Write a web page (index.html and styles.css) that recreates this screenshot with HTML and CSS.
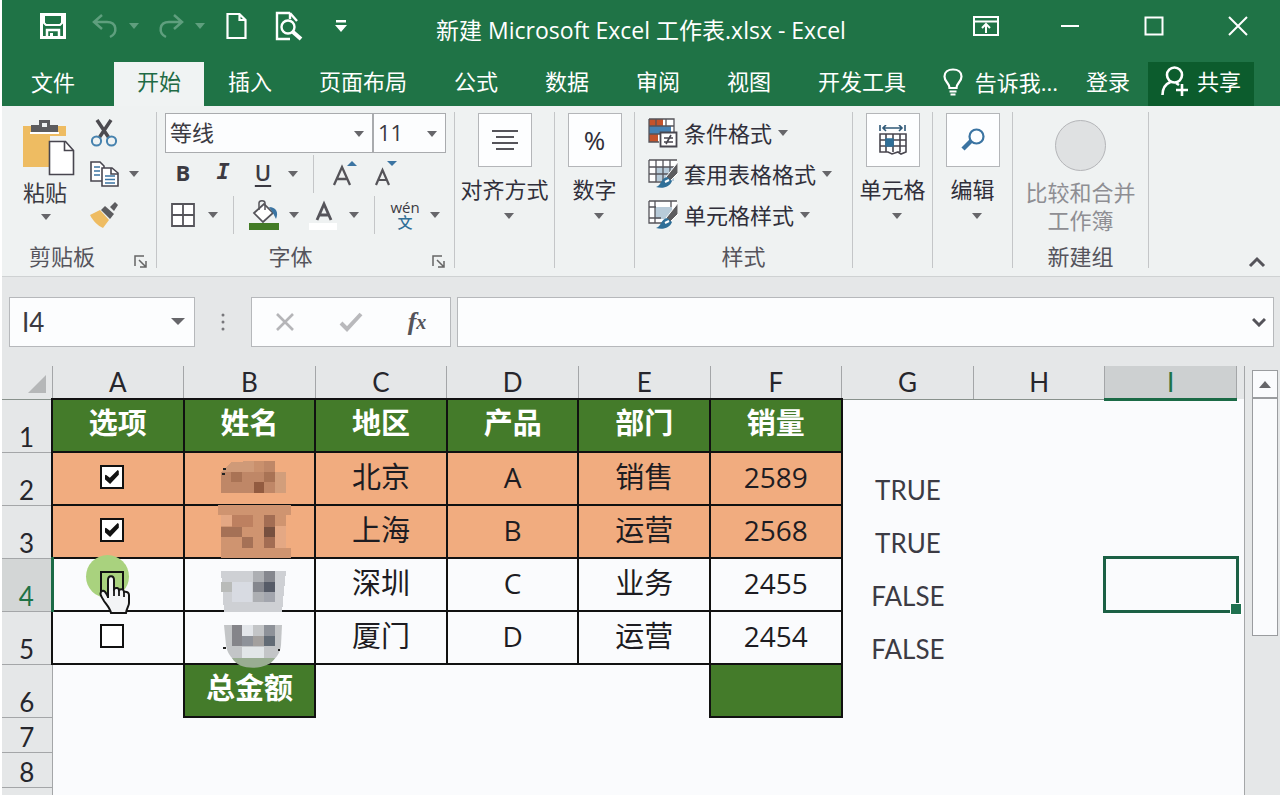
FILE: index.html
```html
<!DOCTYPE html>
<html lang="zh-CN">
<head>
<meta charset="utf-8">
<title>新建 Microsoft Excel 工作表.xlsx - Excel</title>
<link rel="stylesheet" href="styles.css">
</head>
<body>
<div class="app">
  <header class="titlebar">
    <div class="quick">
      <button class="qbtn" aria-label="保存"><svg width="28" height="28" viewBox="0 0 28 28" fill="none" stroke="#fff" stroke-width="3"><path d="M2.500 2.500h23v23h-23z"/><path d="M5 3v8l2 2h14l2-2V3" stroke-width="2"/><path d="M8 26v-8h12v8" stroke-width="2.500"/><path d="M12.500 21v5" stroke-width="3"/></svg></button>
      <button class="qbtn dim" aria-label="撤消"><svg width="28" height="26" viewBox="0 0 28 26" fill="none" stroke="#5f9f7e" stroke-width="2.500"><path d="M11 2 3 9l8 7M3 9h13c10 0 11 11 3 15"/></svg></button>
      <button class="qdrop" aria-label="撤消选项"><i class="caret green"></i></button>
      <button class="qbtn dim" aria-label="恢复"><svg width="28" height="26" viewBox="0 0 28 26" fill="none" stroke="#5f9f7e" stroke-width="2.500"><path d="m17 2 8 7-8 7M25 9H12C2 9 1 20 9 24"/></svg></button>
      <button class="qdrop" aria-label="恢复选项"><i class="caret green"></i></button>
      <button class="qbtn wide" aria-label="新建"><svg width="24" height="28" viewBox="0 0 24 28" fill="none" stroke="#fff" stroke-width="2.200"><path d="M2.500 2h12l6 6v18h-18zM14.500 2v6h6"/></svg></button>
      <button class="qbtn wide" aria-label="打印预览"><svg width="28" height="30" viewBox="0 0 28 30" fill="none" stroke="#fff" stroke-width="2.400"><path d="M15 2H2v26h13M15 2l7 8M15 2v6"/><circle cx="13" cy="16" r="6.500"/><path d="m18 21 8 7" stroke-width="4"/></svg></button>
      <button class="qbtn wide" aria-label="自定义快速访问工具栏"><svg width="12" height="14" viewBox="0 0 12 14"><path d="M1 1h10v2.500H1zM0 6h12l-6 7z" fill="#fff"/></svg></button>
    </div>
    <h1 class="doc-title">新建 Microsoft Excel 工作表.xlsx - Excel</h1>
    <div class="winbtns">
      <button aria-label="功能区显示选项"><svg width="26" height="20" viewBox="0 0 26 20" fill="none" stroke="#fff" stroke-width="2"><path d="M1 1h24v18H1zM1 5.500h24M13 17V9M9 12l4-4 4 4"/></svg></button>
      <button aria-label="最小化"><svg width="20" height="20" viewBox="0 0 20 20"><path d="M1 10h18" stroke="#fff" stroke-width="2"/></svg></button>
      <button aria-label="最大化"><svg width="20" height="20" viewBox="0 0 20 20"><path d="M1.500 1.500h17v17h-17z" fill="none" stroke="#fff" stroke-width="2"/></svg></button>
      <button aria-label="关闭"><svg width="20" height="20" viewBox="0 0 20 20"><path d="m1 1 18 18M19 1 1 19" stroke="#fff" stroke-width="2"/></svg></button>
    </div>
  </header>

  <nav class="tabs">
    <button class="file">文件</button>
    <button class="tab on">开始</button>
    <button class="tab">插入</button>
    <button class="tab">页面布局</button>
    <button class="tab">公式</button>
    <button class="tab">数据</button>
    <button class="tab">审阅</button>
    <button class="tab">视图</button>
    <button class="tab">开发工具</button>
    <div class="account">
      <button class="tell"><svg width="20" height="28" viewBox="0 0 20 28" fill="none" stroke="#fff" stroke-width="2.200"><path d="M6.500 20c0-5-5-6-5-11.500C1.500 4 5 1.500 10 1.500s8.500 2.500 8.500 7c0 5.500-5 6.500-5 11.500zM6.500 23.500h7M7.500 26.500h5"/></svg>告诉我...</button>
      <button class="login">登录</button>
      <button class="share"><svg width="28" height="30" viewBox="0 0 28 30" fill="none" stroke="#fff" stroke-width="2.600"><ellipse cx="13.500" cy="9" rx="7.500" ry="7.500"/><path d="M1.500 29c0-6 3-11 8-13M15 17l3 2M15 24h12M21 18v12"/></svg>共享</button>
    </div>
  </nav>

  <section class="ribbon">
    <div class="group clipboard">
      <div class="body">
        <button class="paste">
          <svg width="54" height="56" viewBox="0 0 54 56"><path d="M1 6h43v10H28v31H1z" fill="#eebc62"/><path d="M9 12V5h8V0h11v5h8v7z" fill="#5c5c5f"/><path d="M20 3h5v4h-5z" fill="#eff1f2"/><path d="M8 13h29" stroke="#fff" stroke-width="2"/><path d="M27.500 21.500h16l8 9v24h-24z" fill="#fff" stroke="#48464f" stroke-width="1.600"/><path d="M42.500 21.500v9h9" fill="none" stroke="#48464f" stroke-width="1.600"/></svg>
          <span>粘贴</span><i class="caret"></i>
        </button>
        <div class="clip-tools">
          <button aria-label="剪切"><svg width="28" height="28" viewBox="0 0 28 28" fill="none"><path d="M7 1 19 19M21 1 9 19" stroke="#4c4b50" stroke-width="3.500"/><circle cx="6.500" cy="22" r="4.600" stroke="#4682ae" stroke-width="2"/><circle cx="21.500" cy="22" r="4.600" stroke="#4682ae" stroke-width="2"/></svg></button>
          <div class="pair"><button aria-label="复制"><svg width="30" height="26" viewBox="0 0 30 26" fill="#fff" stroke="#48464f" stroke-width="1.600"><path d="M1 1h9l4 4v15H1z"/><path d="M4 6h6M4 10h6M4 14h6" stroke="#3b74a2"/><path d="M12 7h10l6 5v13H12z"/><path d="M21 7v6h7" fill="none"/><path d="M15 15h10M15 18.500h10M15 22h10" stroke="#3b74a2"/></svg></button><button class="drop" aria-label="复制选项"><i class="caret"></i></button></div>
          <button aria-label="格式刷"><svg width="28" height="26" viewBox="0 0 28 26"><path d="M0 13l10-5 9 10-6 8C8 24 3 19 0 13z" fill="#eebc62"/><path d="m11 8 4-4 9 8-4 5z" fill="#5c5c5f"/><path d="m20 5 5-5 3 3-4 6z" fill="#5c5c5f"/></svg></button>
        </div>
      </div>
      <div class="label">剪贴板<button class="launch" aria-label="剪贴板设置"><svg width="14" height="13" viewBox="0 0 14 13" fill="none" stroke="#666" stroke-width="1.500"><path d="M1 11V1h9M5 5l7 7M12 6v6H6"/></svg></button></div>
    </div>

    <div class="group font">
      <div class="body rows">
        <div class="row combos">
          <div class="combo name"><select aria-label="字体"><option>等线</option></select><i class="caret"></i></div>
          <div class="combo size"><select aria-label="字号"><option>11</option></select><i class="caret"></i></div>
        </div>
        <div class="row">
          <button class="fb b">B</button><button class="fb i">I</button><button class="fb u">U</button><button class="drop" aria-label="下划线选项"><i class="caret"></i></button>
          <span class="vsep"></span>
          <button class="fb" aria-label="增大字号"><svg width="26" height="28" viewBox="0 0 26 28"><path d="M3 25 11 7l8 18M6 19h10" fill="none" stroke="#555459" stroke-width="2.300"/><path d="m16 6 5-5 5 5z" fill="#3b74a2"/></svg></button>
          <button class="fb" aria-label="减小字号"><svg width="26" height="28" viewBox="0 0 26 28"><path d="m5 25 6.500-15L18 25M7 20h9" fill="none" stroke="#555459" stroke-width="2.200"/><path d="m16 1 5 5 5-5z" fill="#3b74a2"/></svg></button>
        </div>
        <div class="row">
          <button class="fb" aria-label="边框"><svg width="24" height="24" viewBox="0 0 24 24" fill="#fff" stroke="#55545a" stroke-width="1.800"><path d="M1 1h22v22H1zM12 1v22M1 12h22"/></svg></button><button class="drop" aria-label="边框选项"><i class="caret"></i></button>
          <span class="vsep"></span>
          <button class="fb" aria-label="填充颜色"><svg width="30" height="30" viewBox="0 0 30 30"><path d="M5 13 15 4l9 9-10 9z" fill="#fff" stroke="#55545a" stroke-width="1.700"/><path d="M10 10V3c0-3 6-3 6 0v7" fill="none" stroke="#55545a" stroke-width="1.500"/><path d="M20 7c7 0 10 5 7 12l-3-6z" fill="#3b74a2"/><path d="M0 23h30v7H0z" fill="#427b25"/></svg></button><button class="drop" aria-label="填充选项"><i class="caret"></i></button>
          <button class="fb" aria-label="字体颜色"><svg width="30" height="30" viewBox="0 0 30 30"><path d="M0 23h28v7H0z" fill="#fff"/><path d="M8 20 15 4l7 16M10.500 15h9" fill="none" stroke="#55545a" stroke-width="2.800"/></svg></button><button class="drop" aria-label="字体颜色选项"><i class="caret"></i></button>
          <span class="vsep"></span>
          <button class="fb pinyin"><span>wén</span><b>文</b></button><button class="drop" aria-label="拼音选项"><i class="caret"></i></button>
        </div>
      </div>
      <div class="label">字体<button class="launch" aria-label="字体设置"><svg width="14" height="13" viewBox="0 0 14 13" fill="none" stroke="#666" stroke-width="1.500"><path d="M1 11V1h9M5 5l7 7M12 6v6H6"/></svg></button></div>
    </div>

    <div class="group align">
      <button class="big"><span class="tile"><svg width="26" height="20" viewBox="0 0 26 20" stroke="#55545a" stroke-width="1.800"><path d="M0 1h26M4 7h18M0 13h26M4 19h18"/></svg></span>对齐方式<i class="caret"></i></button>
    </div>
    <div class="group small">
      <button class="big"><span class="tile pct">%</span>数字<i class="caret"></i></button>
    </div>

    <div class="group styles">
      <div class="body rows">
        <button class="row sty"><svg width="30" height="30" viewBox="0 0 30 30"><path d="M1 1h25v23H1z" fill="#fff"/><path d="M1 1h14v7H1zM1 16h9v8H1z" fill="#c3532c"/><path d="M1 8h22v8H1z" fill="#4682b4"/><path d="M1 1h25v23M1 1v23h10M1 8h25M1 16h12M8 1v7M18 1v7" fill="none" stroke="#55545a" stroke-width="1.300"/><path d="M12.500 14.500h16v14h-16z" fill="#fff" stroke="#48464f" stroke-width="1.800"/><path d="M16 20h9M16 24h9M23 17l-5 9" stroke="#48464f" stroke-width="1.600"/></svg>条件格式<i class="caret"></i></button>
        <button class="row sty"><svg width="30" height="30" viewBox="0 0 30 30"><path d="M1 1h28v8l-9 14H1z" fill="#fff"/><path d="M8 8h18v14H8z" fill="#b8cbd9"/><path d="M1 1h28M1 1v22h13M1 8h26M1 15h21M8 1v22M15 1v20M22 1v13" fill="none" stroke="#55545a" stroke-width="1.300"/><path d="M30 3v11l-8 8-4-4z" fill="#5c5c5f" stroke="#fff" stroke-width="1"/><path d="M8 28c5-1 5-9 11-10l5 4c-2 6-9 8-16 6z" fill="#2f6f98"/><path d="m17 23 4-2" stroke="#fff" stroke-width="2"/></svg>套用表格格式<i class="caret"></i></button>
        <button class="row sty"><svg width="30" height="30" viewBox="0 0 30 30"><path d="M1 1h28v8l-9 14H1z" fill="#fff"/><path d="M7 7h17v12H7z" fill="#b8cbd9"/><path d="M1 1h28M1 1v22h13M1 7h7M1 18h12M7 1v22M23 1v6" fill="none" stroke="#55545a" stroke-width="1.300"/><path d="M30 3v11l-8 8-4-4z" fill="#5c5c5f" stroke="#fff" stroke-width="1"/><path d="M8 28c5-1 5-9 11-10l5 4c-2 6-9 8-16 6z" fill="#2f6f98"/><path d="m17 23 4-2" stroke="#fff" stroke-width="2"/></svg>单元格样式<i class="caret"></i></button>
      </div>
      <div class="label">样式</div>
    </div>

    <div class="group small">
      <button class="big"><span class="tile"><svg width="30" height="30" viewBox="0 0 30 30" fill="none" stroke="#48464f" stroke-width="1.600"><path d="M2 9h26v18l-5 2-3-2-6 2-4-2H2zM2 15h26M2 21h26M8 9v18M15 9v18M22 9v18"/><path d="M8 14h7v7H8z" fill="#2f6f98" stroke="#2f6f98"/><path d="M2 0v6M27 0v6M5 3h19M8 0 5 3l3 3M21 0l3 3-3 3" stroke="#2f5877"/></svg></span>单元格<i class="caret"></i></button>
    </div>
    <div class="group small">
      <button class="big"><span class="tile"><svg width="24" height="24" viewBox="0 0 24 24" fill="none"><circle cx="15.500" cy="8.500" r="7" stroke="#3b74a2" stroke-width="2.200"/><path d="m10 13-8 8" stroke="#3b74a2" stroke-width="4.500"/></svg></span>编辑<i class="caret"></i></button>
    </div>
    <div class="group compare">
      <button class="merge" disabled><span class="disc"></span><span>比较和合并</span><span>工作簿</span></button>
      <div class="label">新建组</div>
    </div>
    <button class="collapse" aria-label="折叠功能区"><svg width="18" height="12" viewBox="0 0 18 12"><path d="m2 10 7-7 7 7" fill="none" stroke="#55545a" stroke-width="3"/></svg></button>
  </section>

  <section class="formula">
    <div class="namebox"><input aria-label="名称框" value="I4"><i class="caret wide"></i></div>
    <svg class="dots" width="4" height="18" viewBox="0 0 4 18" fill="#77777b"><circle cx="2" cy="2" r="1.500"/><circle cx="2" cy="9" r="1.500"/><circle cx="2" cy="16" r="1.500"/></svg>
    <div class="fxbox">
      <button aria-label="取消"><svg width="20" height="18" viewBox="0 0 20 18"><path d="m2 1 16 16M18 1 2 17" stroke="#b5b5b8" stroke-width="2.600"/></svg></button>
      <button aria-label="输入"><svg width="24" height="20" viewBox="0 0 24 20"><path d="m2 11 6 6L22 2" fill="none" stroke="#b9b9bc" stroke-width="4"/></svg></button>
      <button class="fx" aria-label="插入函数">f<sub>x</sub></button>
    </div>
    <div class="fbar"><input aria-label="编辑栏"><svg width="14" height="10" viewBox="0 0 14 10"><path d="m1 2 6 6 6-6" fill="none" stroke="#55545a" stroke-width="3"/></svg></div>
  </section>

  <main class="work">
    <div class="sheet">
      <table>
        <colgroup><col class="rowcol"><col span="9"></colgroup>
        <thead><tr><th class="corner"><svg width="18" height="18" viewBox="0 0 18 18"><path d="M18 0v18H0z" fill="#b5b7b8"/></svg></th><th>A</th><th>B</th><th>C</th><th>D</th><th>E</th><th>F</th><th>G</th><th>H</th><th class="sel">I</th></tr></thead>
        <tbody>
          <tr class="head"><th>1</th><td class="d">选项</td><td class="d">姓名</td><td class="d">地区</td><td class="d">产品</td><td class="d">部门</td><td class="d">销量</td><td></td><td></td><td></td></tr>
          <tr class="picked"><th>2</th><td class="d chk"><input type="checkbox" checked aria-label="选择第2行"></td>
            <td class="d host">
              <svg class="mosaic" width="76" height="212" viewBox="216 458 76 212" shape-rendering="crispEdges">
                <path d="M222 470l8-8 23-1 1 11h-33z" fill="#cf9a78"/><path d="M253 461h21v11h-21z" fill="#c9906d"/><path d="M263 461h11v11h-11z" fill="#bf8767"/><path d="M220 472h65v21h-65z" fill="#bf8767"/><path d="M230 472h11v10h-11zM263 472h11v10h-11z" fill="#a97355"/><path d="M253 482h10v11h-10z" fill="#925b40"/><path d="M274 472h11v21h-11z" fill="#d29e7b"/><path d="M222 468h3v2h-3zM221 473h3v2h-3z" fill="#222"/>
                <path d="M217 505h73v10h-73zM220 515h65v34h-65zM220 548h70v10h-70z" fill="#cf9470"/><path d="M220 515h11v11h-11zM274 526h11v22h-11z" fill="#e4a884"/><path d="M220 527h21v10h-21zM241 537h11v11h-11z" fill="#a57156"/><path d="M231 515h21v12h-21z" fill="#bd8060"/><path d="M263 515h11v12h-11zM263 537h11v11h-11z" fill="#a36d53"/><path d="M263 527h11v10h-11z" fill="#77503f"/>
                <path d="M220 571h65l-4 41h-58z" fill="#ced0d4"/><path d="M231 582h20v20h-20z" fill="#d8dbe2"/><path d="M220 582h11v10h-11z" fill="#b9bbb9"/><path d="M252 571h11v31h-11z" fill="#adafb3"/><path d="M263 571h11v11h-11zM252 582h11v10h-11z" fill="#85878e"/><path d="M263 582h11v10h-11z" fill="#565b67"/><path d="M263 592h11v10h-11z" fill="#a2a5ad"/>
                <path d="M223 625h58l-1 20c-2 28-51 30-55 0z" fill="#c3c5c7" shape-rendering="auto"/><path d="M231 625h10v21h-10z" fill="#85858a"/><path d="M241 625h11v11h-11z" fill="#e3e6ea"/><path d="M241 636h11v10h-11zM263 625h11v11h-11z" fill="#8e9299"/><path d="M252 636h11v10h-11z" fill="#a3a09e"/><path d="M263 636h11v10h-11z" fill="#626b75"/><path d="M241 647h22v11h-22z" fill="#e2e6e8"/><path d="M231 658h43c-6 12-36 14-43 0z" fill="#99ad92" shape-rendering="auto"/><path d="M222 647h3v2h-3zM277 649h2v2h-2z" fill="#222"/>
              </svg>
            </td><td class="d">北京</td><td class="d n">A</td><td class="d">销售</td><td class="d n">2589</td><td>TRUE</td><td></td><td></td></tr>
          <tr class="picked"><th>3</th><td class="d chk"><input type="checkbox" checked aria-label="选择第3行"></td><td class="d"></td><td class="d">上海</td><td class="d n">B</td><td class="d">运营</td><td class="d n">2568</td><td>TRUE</td><td></td><td></td></tr>
          <tr><th class="sel">4</th><td class="d chk host"><i class="halo"></i><input type="checkbox" aria-label="选择第4行">
            <svg class="hand" width="32" height="40" viewBox="0 0 32 40"><path d="M9 23V5c0-5 6-5 6 0v9c2-2 5-1 5 1 3-2 5 0 5 2 3-1 5 1 5 3v8c0 3-2 4-3 10H12c-1-5-5-9-7-12-3-5-5-8-2-10 2-1 4 1 6 6z" fill="#f3f4f6" stroke="#151515" stroke-width="2"/><path d="M15 13v8M20 15v6M25 17v5" fill="none" stroke="#151515" stroke-width="1.800"/></svg>
          </td><td class="d"></td><td class="d">深圳</td><td class="d n">C</td><td class="d">业务</td><td class="d n">2455</td><td>FALSE</td><td></td><td class="host"><i class="cursor"></i></td></tr>
          <tr><th>5</th><td class="d chk"><input type="checkbox" aria-label="选择第5行"></td><td class="d"></td><td class="d">厦门</td><td class="d n">D</td><td class="d">运营</td><td class="d n">2454</td><td>FALSE</td><td></td><td></td></tr>
          <tr class="total"><th>6</th><td></td><td class="d">总金额</td><td></td><td></td><td></td><td class="d"></td><td></td><td></td><td></td></tr>
          <tr class="low"><th>7</th><td></td><td></td><td></td><td></td><td></td><td></td><td></td><td></td><td></td></tr>
          <tr class="low"><th>8</th><td></td><td></td><td></td><td></td><td></td><td></td><td></td><td></td><td></td></tr>
          <tr class="low"><th></th><td></td><td></td><td></td><td></td><td></td><td></td><td></td><td></td><td></td></tr>
        </tbody>
      </table>
    </div>
    <div class="scroll"><button aria-label="向上滚动"><svg width="12" height="8" viewBox="0 0 12 8"><path d="M0 8h12L6 1z" fill="#66666a"/></svg></button><div class="thumb"></div></div>
  </main>
</div>
</body>
</html>
```
FILE: styles.css
```css
* { box-sizing: border-box; }
body { margin: 0; background: #fff; font-family: "Open Sans", "Noto Sans CJK SC", sans-serif; font-size: 22px; line-height: 24px; color: #3b3a42; }
button, input, select { font: inherit; color: inherit; background: none; border: 0; padding: 0; margin: 0; border-radius: 0; outline: 0; }
button { display: flex; align-items: center; justify-content: center; white-space: nowrap; }
svg { display: block; flex: none; }
.app { height: 100vh; display: flex; flex-direction: column; overflow: hidden; padding-left: 2px; }
.caret { display: block; flex: none; border: 5px solid transparent; border-top: 6px solid #66666a; border-bottom: 0; }
.caret.green { border-top-color: #5f9f7e; }
.caret.wide { border-width: 7px 7px 0; }

.titlebar { display: grid; grid-template-columns: 1fr auto 1fr; align-items: center; height: 60px; flex: none; background: #1f7346; color: #fff; padding-bottom: 8px; }
.quick { display: flex; align-items: center; padding-left: 29px; }
.qbtn { width: 44px; height: 44px; }
.qbtn.dim { width: 44px; margin-left: 8px; }
.qdrop { width: 14px; height: 44px; }
.qbtn.wide { margin-left: 8px; }
.doc-title { margin: 8px 0 0; font-size: 23px; font-weight: 400; white-space: nowrap; }
.winbtns { display: flex; justify-content: flex-end; }
.winbtns button { width: 84px; height: 44px; }

.tabs { display: flex; flex: none; height: 46px; padding-top: 2px; gap: 1px; background: #1f7346; color: #fff; }
.tabs button { padding-bottom: 6px; }
.tabs .file { width: 102px; margin-right: 9px; padding-bottom: 4px; }
.tab { padding: 0 23px; }
.tab.on { background: #f0f3f3; color: #1f6b45; }
.account { display: flex; margin-left: auto; padding-right: 26px; }
.account .tell { gap: 12px; margin-right: 28px; padding-bottom: 4px; }
.login { margin-right: 18px; }
.account .share { width: 106px; gap: 8px; background: #0c5c2d; }

.ribbon { display: flex; flex: none; height: 171px; padding: 6px 0 8px; background: #eff2f2; border-bottom: 1px solid #cfd2d3; }
.group { display: flex; flex-direction: column; flex: none; border-right: 1px solid #c4c6c8; }
.body { display: flex; flex: 1; }
.body.rows { flex-direction: column; }
.row { display: flex; align-items: center; height: 41px; }
.label { display: flex; justify-content: center; align-items: center; position: relative; height: 24px; color: #55545c; }
.launch { position: absolute; right: 8px; bottom: 0; }
.clipboard { width: 155px; }
.clipboard .label { padding-right: 34px; }
.paste { flex-direction: column; justify-content: flex-start; gap: 4px; width: 54px; margin: 8px 0 0 20px; }
.paste span { margin-right: 8px; }
.paste .caret { margin: 6px 6px 0 0; }
.clip-tools { display: flex; flex-direction: column; align-items: flex-start; margin-left: 14px; }
.clip-tools button { height: 41px; }
.pair { display: flex; gap: 4px; }
.drop { width: 20px; height: 40px; }
.font { width: 298px; }
.font .row { padding-left: 6px; }
.font .combos { padding-left: 8px; }
.font .label { padding-right: 30px; }
.combo { position: relative; height: 40px; background: #fcfdfe; border: 1px solid #a9abae; }
.combo select { appearance: none; width: 100%; height: 36px; padding-left: 4px; }
.combo .caret { position: absolute; right: 8px; top: 17px; pointer-events: none; }
.combo.name { width: 208px; }
.combo.size { width: 73px; }
.fb { width: 40px; height: 40px; }
.fb.b, .fb.u, .fb.i { padding-bottom: 4px; }
.fb.b { font-weight: 700; }
.fb.i { font-style: italic; font-family: "DejaVu Sans Mono", monospace; font-weight: 700; }
.fb.u { font-weight: 600; text-decoration: underline; text-underline-offset: 4px; }
.vsep { width: 1px; height: 38px; margin: 0 10px; background: #c4c6c8; }
.pinyin { flex-direction: column; font-size: 15px; line-height: 14px; }
.pinyin b { color: #2f6f98; font-weight: 500; line-height: 16px; }
.big { flex-direction: column; justify-content: flex-start; height: 132px; padding-top: 1px; color: #302f3a; }
.big .caret { margin: 12px 0 0 8px; }
.tile { display: flex; align-items: center; justify-content: center; width: 54px; height: 54px; margin-bottom: 10px; background: #fdfeff; border: 1px solid #b4b6b9; }
.tile.pct { font-size: 26px; }
.align { width: 100px; }
.small { width: 80px; }
.styles { width: 218px; }
.sty { justify-content: flex-start; gap: 6px; margin-left: 13px; color: #302f3a; }
.compare { width: 136px; }
.merge { flex: 1; flex-direction: column; justify-content: flex-start; color: #8e8e93; line-height: 28px; padding-top: 8px; }
.disc { width: 51px; height: 51px; margin-bottom: 7px; border: 1px solid #b4b5b8; border-radius: 50%; background: #dfe1e2; }
.collapse { margin: auto 14px 0 auto; }

.formula { display: flex; flex: none; align-items: center; height: 89px; padding: 0 6px 0 7px; background: #e5e7e8; }
.namebox, .fxbox, .fbar { display: flex; align-items: center; height: 50px; background: #fcfdfe; border: 1px solid #b6b8bb; }
.namebox { width: 186px; padding: 0 9px 0 12px; font-family: Lato, sans-serif; font-size: 26px; }
.namebox input { flex: 1; min-width: 0; }
.dots { margin: 0 26px; }
.fxbox { width: 200px; }
.fxbox button { flex: 1; height: 48px; }
.fx { font: italic 700 26px "Liberation Serif", serif; color: #55545a; }
.fx sub { font-size: 20px; line-height: 20px; }
.fbar { flex: 1; margin-left: 6px; padding-right: 7px; }
.fbar input { flex: 1; height: 48px; padding-left: 8px; }

.work { display: flex; flex: 1; min-height: 0; background: #e5e7e8; }
.sheet { flex: 1; min-width: 0; padding-right: 7px; background: linear-gradient(#e5e7e8 33px, #fafbfd 33px); }
table { width: 100%; table-layout: fixed; border-collapse: collapse; font-family: Lato, "Noto Sans CJK SC", sans-serif; font-size: 26px; line-height: 30px; color: #26262c; }
.rowcol { width: 50px; }
th, td { padding: 0; text-align: center; font-weight: 400; }
thead tr { height: 33px; }
thead th { background: #e5e7e8; border-right: 1px solid #a4a6a8; border-bottom: 1px solid #88918c; }
.corner svg { margin: 4px 6px 0 auto; }
thead .sel { background: #cdd0d1; color: #1f7346; border-bottom: 3px solid #1b6a46; }
tbody tr { height: 53px; }
tbody th { vertical-align: bottom; background: #e5e7e8; border-right: 1px solid #a4a6a8; border-bottom: 1px solid #a4a6a8; }
tbody th.sel { background: #d3d6d6; color: #1f7346; border-right: 3px solid #1b6a46; }
td { vertical-align: bottom; color: #3c3b44; }
td.d { vertical-align: middle; border: 2px solid #111; padding-bottom: 3px; font-family: "Open Sans", "Noto Sans CJK SC", sans-serif; font-size: 29px; color: #1d1c22; }
td.n { font-size: 28px; }
.head td.d, .total td.d { padding-bottom: 6px; background: #447b2a; color: #fff; font-weight: 700; }
.picked td.d { background: #f1ac7f; }
td.chk { padding-right: 12px; }
.chk input { appearance: none; display: block; width: 24px; height: 24px; margin: 0 auto; border: 2px solid #111; background: #fff; }
.chk input:checked::before { content: ""; display: block; width: 14px; height: 14px; margin: 3px; background: #111; clip-path: polygon(0 40%, 8% 34%, 36% 56%, 92% 0, 100% 8%, 100% 34%, 38% 100%, 0 66%); }
.host { position: relative; }
.host input { position: relative; }
.mosaic { position: absolute; left: 32px; top: 5px; z-index: 2; }
.halo { position: absolute; left: 32px; top: -4px; width: 43px; height: 43px; border-radius: 50%; background: #a9d27e; }
td.host input { background: transparent; }
.hand { position: absolute; left: 45px; top: 16px; z-index: 2; }
.cursor { position: absolute; inset: -2px; border: 3px solid #1b6045; }
.cursor::after { content: ""; position: absolute; right: -6px; bottom: -5px; width: 10px; height: 10px; border: 1px solid #fff; background: #1f7150; }
tr.low { height: 35px; }
.scroll { display: flex; flex-direction: column; width: 36px; padding: 4px 2px 0 7px; border-left: 1px solid #a4a6a8; }
.scroll button { flex: none; height: 28px; background: #fafbfd; border: 1px solid #9a9c9f; }
.thumb { flex: none; height: 238px; background: #fafbfd; border: 1px solid #9a9c9f; }
```
